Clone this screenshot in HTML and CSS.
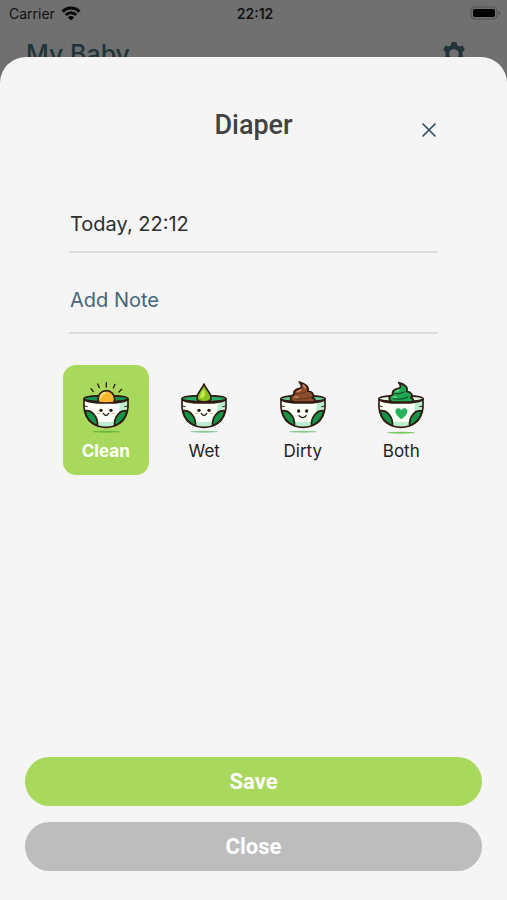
FILE: index.html
```html
<!DOCTYPE html>
<html lang="en">
<head>
<meta charset="utf-8">
<meta name="viewport" content="width=device-width, initial-scale=1">
<title>Diaper</title>
<link rel="stylesheet" href="styles.css">
</head>
<body>
<div class="status">
  <div class="carrier"><span>Carrier</span>
    <svg width="20" height="15" viewBox="0 0 20 15" aria-hidden="true"><g fill="none" stroke="#080808" stroke-width="3"><path d="M1.5 5.6a12 12 0 0 1 17 0"/><path d="M4.8 9a7.4 7.4 0 0 1 10.4 0"/></g><path fill="#080808" d="M10 14.5 6.9 11.4a4.4 4.4 0 0 1 6.2 0z"/></svg>
  </div>
  <time class="clock">22:12</time>
  <svg class="battery" width="31" height="15" viewBox="0 0 31 15" aria-hidden="true"><rect x="1" y="1" width="26" height="12" rx="4" fill="none" stroke="#535353" stroke-width="1.2"/><rect x="3" y="3" width="22" height="8" rx="2" fill="#000"/><path d="M28.5 5v4q2-.5 2-2t-2-2" fill="#535353"/></svg>
</div>
<header class="appbar">
  <h2>My Baby</h2>
  <svg width="24" height="24" viewBox="0 0 24 24" aria-hidden="true"><path fill="#213438" fill-rule="evenodd" d="M9.500 0h5l.6 3.200 2.300 1.300 3.100-1.100 2.500 4.300L20.500 9.800v4.400l2.500 2.100-2.500 4.300-3.100-1.100-2.300 1.300-.6 3.200h-5l-.6-3.200-2.300-1.300-3.100 1.100L1 16.300l2.500-2.100V9.800L1 7.700l2.500-4.300 3.100 1.100 2.300-1.300zM12 7.200a4.800 4.800 0 1 0 0 9.600 4.800 4.800 0 0 0 0-9.600z"/></svg>
</header>
<main class="sheet">
  <div class="title-row">
    <h1>Diaper</h1>
    <button class="dismiss" type="button" aria-label="Dismiss"><svg width="14" height="14" viewBox="0 0 14 14"><path d="M1 1l12 12M13 1 1 13" stroke="#2f5066" stroke-width="1.7" stroke-linecap="round"/></svg></button>
  </div>
  <form class="entry">
    <div class="fields">
      <input class="when" type="text" aria-label="Time" value="Today, 22:12">
      <input class="note" type="text" aria-label="Note" placeholder="Add Note">
    </div>
    <div class="kinds" role="radiogroup" aria-label="Diaper type">
      <label class="kind"><input type="radio" name="kind" checked>
        <svg class="art" viewBox="0 0 180 195" aria-hidden="true">
          <ellipse cx="90" cy="170" rx="42" ry="3" fill="#68b943"/>
          <ellipse class="line" cx="90" cy="71" rx="66" ry="9" fill="#149354"/>
          <path class="ray" d="M45 41l7 9M65 27l5 11M91 23v13M117 28l-5 11M137 43l-8 8"/>
          <circle class="line" cx="91" cy="72" r="25" fill="#f9b92f"/>
          <path d="M74 66q3-11 13-12" fill="none" stroke="#ffe17a" stroke-width="6" stroke-linecap="round"/>
          <use href="#bowl"/>
          <use href="#face"/>
        </svg>
        <span>Clean</span></label>
      <label class="kind"><input type="radio" name="kind">
        <svg class="art" viewBox="0 0 180 195" aria-hidden="true">
          <defs>
            <g id="bowl">
              <path d="M24 72q7 12 66 12t66-12v24c-2 38-32 61-66 61S26 134 24 96z" fill="#fbfff6"/>
              <path d="M132 81l24-7v26q-15 1-27 13zM65 141h50l-2 13q-23 6-46 0z" fill="#b9efcf"/>
              <path class="line" d="M27 107c22-3 40 20 37 45-19-6-34-22-37-45zM153 107c-22-3-40 20-37 45 19-6 34-22 37-45z" fill="#159447"/>
              <path class="line" d="M24 72q7 12 66 12t66-12v24c-2 38-32 61-66 61S26 134 24 96z" fill="none"/>
              <path d="M26 93q4 2 9 2M145 95q5 0 9-2" fill="none" stroke="#301a12" stroke-width="3"/>
            </g>
            <g id="face">
              <circle cx="75" cy="106" r="5" fill="#281713"/><circle cx="105" cy="106" r="5" fill="#281713"/>
              <path d="M82 115q8 13 16 0" fill="none" stroke="#281713" stroke-width="4" stroke-linecap="round"/>
              <path d="M65 115h6M109 115h6" stroke="#ffb58d" stroke-width="4" stroke-linecap="round"/>
            </g>
          </defs>
          <ellipse cx="90" cy="170" rx="42" ry="3" fill="#8acb96"/>
          <ellipse class="line" cx="90" cy="71" rx="66" ry="9" fill="#28ad6b"/>
          <path class="line" d="M90 27c5 15 21 26 21 42 0 15-42 15-42 0 0-16 16-27 21-42z" fill="#8ac51d"/>
          <path d="M88 43q-8 13-11 24 11 7 16-7 2-9-5-17z" fill="#c8e94b"/>
          <use href="#bowl"/><use href="#face"/>
        </svg>
        <span>Wet</span></label>
      <label class="kind"><input type="radio" name="kind">
        <svg class="art" viewBox="0 0 180 195" aria-hidden="true">
          <ellipse cx="90" cy="170" rx="42" ry="3" fill="#8acb96"/>
          <ellipse class="line" cx="90" cy="71" rx="66" ry="9" fill="#65c994"/>
          <path class="line" d="M79 21c18 5 31 15 25 27 17 2 21 14 13 20 12 3 10 12 2 13H62c-13-5-12-18 1-22-3-12 8-17 18-19 7-3 5-10-2-19z" fill="#8d4d2a"/>
          <path d="M67 56q17 3 31-5M66 71q25 5 44-5" fill="none" stroke="#5e301c" stroke-width="3" stroke-linecap="round"/>
          <path d="M73 50l11-5M65 66l9 1M92 31l5 7" stroke="#cd865a" stroke-width="5" stroke-linecap="round"/>
          <use href="#bowl"/>
          <circle cx="77" cy="108" r="5" fill="#281713"/><circle cx="101" cy="108" r="5" fill="#281713"/>
          <path d="M78 122q11 12 22 0" fill="none" stroke="#281713" stroke-width="4" stroke-linecap="round"/>
        </svg>
        <span>Dirty</span></label>
      <label class="kind"><input type="radio" name="kind">
        <svg class="art" viewBox="0 0 180 195" aria-hidden="true">
          <ellipse cx="90" cy="173" rx="42" ry="3" fill="#7bc963"/>
          <ellipse class="line" cx="90" cy="71" rx="66" ry="9" fill="#dff8e8"/>
          <path class="line" d="M83 23c18 5 30 14 24 26 15 2 20 13 12 19 11 3 9 12 1 13H64c-13-5-12-18 1-22-3-12 8-17 18-19 7-3 7-9 0-17z" fill="#20a653"/>
          <path d="M69 56q17 3 31-5M67 71q25 5 44-5" fill="none" stroke="#123d24" stroke-width="3" stroke-linecap="round"/>
          <path d="M75 49l9-4M67 66l9 1" stroke="#65d58c" stroke-width="5" stroke-linecap="round"/>
          <use href="#bowl"/>
          <path d="M91 133C71 120 69 103 80 100q8-2 11 6 4-8 12-6c11 4 8 20-12 33z" fill="#27b45e"/>
        </svg>
        <span>Both</span></label>
    </div>
    <div class="actions">
      <button class="action save" type="button">Save</button>
      <button class="action close" type="button">Close</button>
    </div>
  </form>
</main>
</body>
</html>
```
FILE: styles.css
```css
* { box-sizing: border-box; }

body {
  margin: 0;
  min-height: 100vh;
  display: flex;
  flex-direction: column;
  background: #707070;
  color: #2d2d2d;
  font-family: Inter, "Liberation Sans", sans-serif;
}

h1, h2 { margin: 0; }
svg { display: block; flex: none; }

.status {
  display: grid;
  grid-template-columns: 1fr auto 1fr;
  align-items: center;
  height: 27px;
  padding: 0 6px 0 9px;
  color: #111;
  font-size: 14px;
}
.carrier { display: flex; align-items: center; gap: 6px; }
.clock { font-weight: 600; }
.battery { justify-self: end; }

.appbar {
  display: flex;
  justify-content: space-between;
  align-items: center;
  height: 54px;
  padding: 0 41px 0 26px;
  color: #213438;
}
.appbar h2 { font-size: 25px; font-weight: 500; line-height: 32px; }

.sheet {
  position: relative;
  flex: 1;
  display: flex;
  flex-direction: column;
  margin-top: -24px;
  padding: 48px 25px 29px;
  border-radius: 26px 26px 0 0;
  background: #f5f5f5;
}

.title-row {
  display: grid;
  grid-template-columns: 1fr auto 1fr;
  align-items: end;
  padding: 0 38px;
}
h1 {
  grid-column: 2;
  color: #424242;
  font: 500 27px/40px Roboto, sans-serif;
}
.dismiss {
  justify-self: end;
  padding: 8px;
  border: 0;
  background: none;
}

.entry { flex: 1; display: flex; flex-direction: column; }
.fields { margin: 48px 44px 0; }
.fields input {
  display: block;
  width: 100%;
  border: 0;
  border-bottom: 2px solid #dcdcdc;
  border-radius: 0;
  outline: 0;
  background: none;
  color: #2d2d2d;
  font: 400 20px/24px Inter, sans-serif;
}
.fields .when { height: 60px; padding: 4px 1px 0; }
.fields .note { height: 81px; padding: 14px 1px 0; }
.note::placeholder { color: #45667a; opacity: 1; }

.kinds {
  display: grid;
  grid-template-columns: repeat(4, 1fr);
  gap: 13px;
  margin: 31px 38px 24px;
}
.kind {
  position: relative;
  display: flex;
  flex-direction: column;
  align-items: center;
  padding: 10px 0 12px;
  border-radius: 13px;
  color: #222;
  font-size: 17px;
  line-height: 23px;
}
.kind input { position: absolute; opacity: 0; margin: 0; }
.kind:has(input:checked) {
  background: #a8d95c;
  color: #fff;
  font-weight: 700;
}
.art { width: 60px; height: 65px; }
.line { stroke: #301a12; stroke-width: 5px; stroke-linejoin: round; }
.ray { stroke: #301a12; stroke-width: 4px; stroke-linecap: round; }

.actions {
  display: flex;
  flex-direction: column;
  gap: 16px;
  margin-top: auto;
}
.action {
  height: 49px;
  border: 0;
  border-radius: 25px;
  color: #fff;
  font: 700 22px/28px Roboto, sans-serif;
}
.save { background: #a8d95c; }
.close { background: #bdbdbd; }
```
